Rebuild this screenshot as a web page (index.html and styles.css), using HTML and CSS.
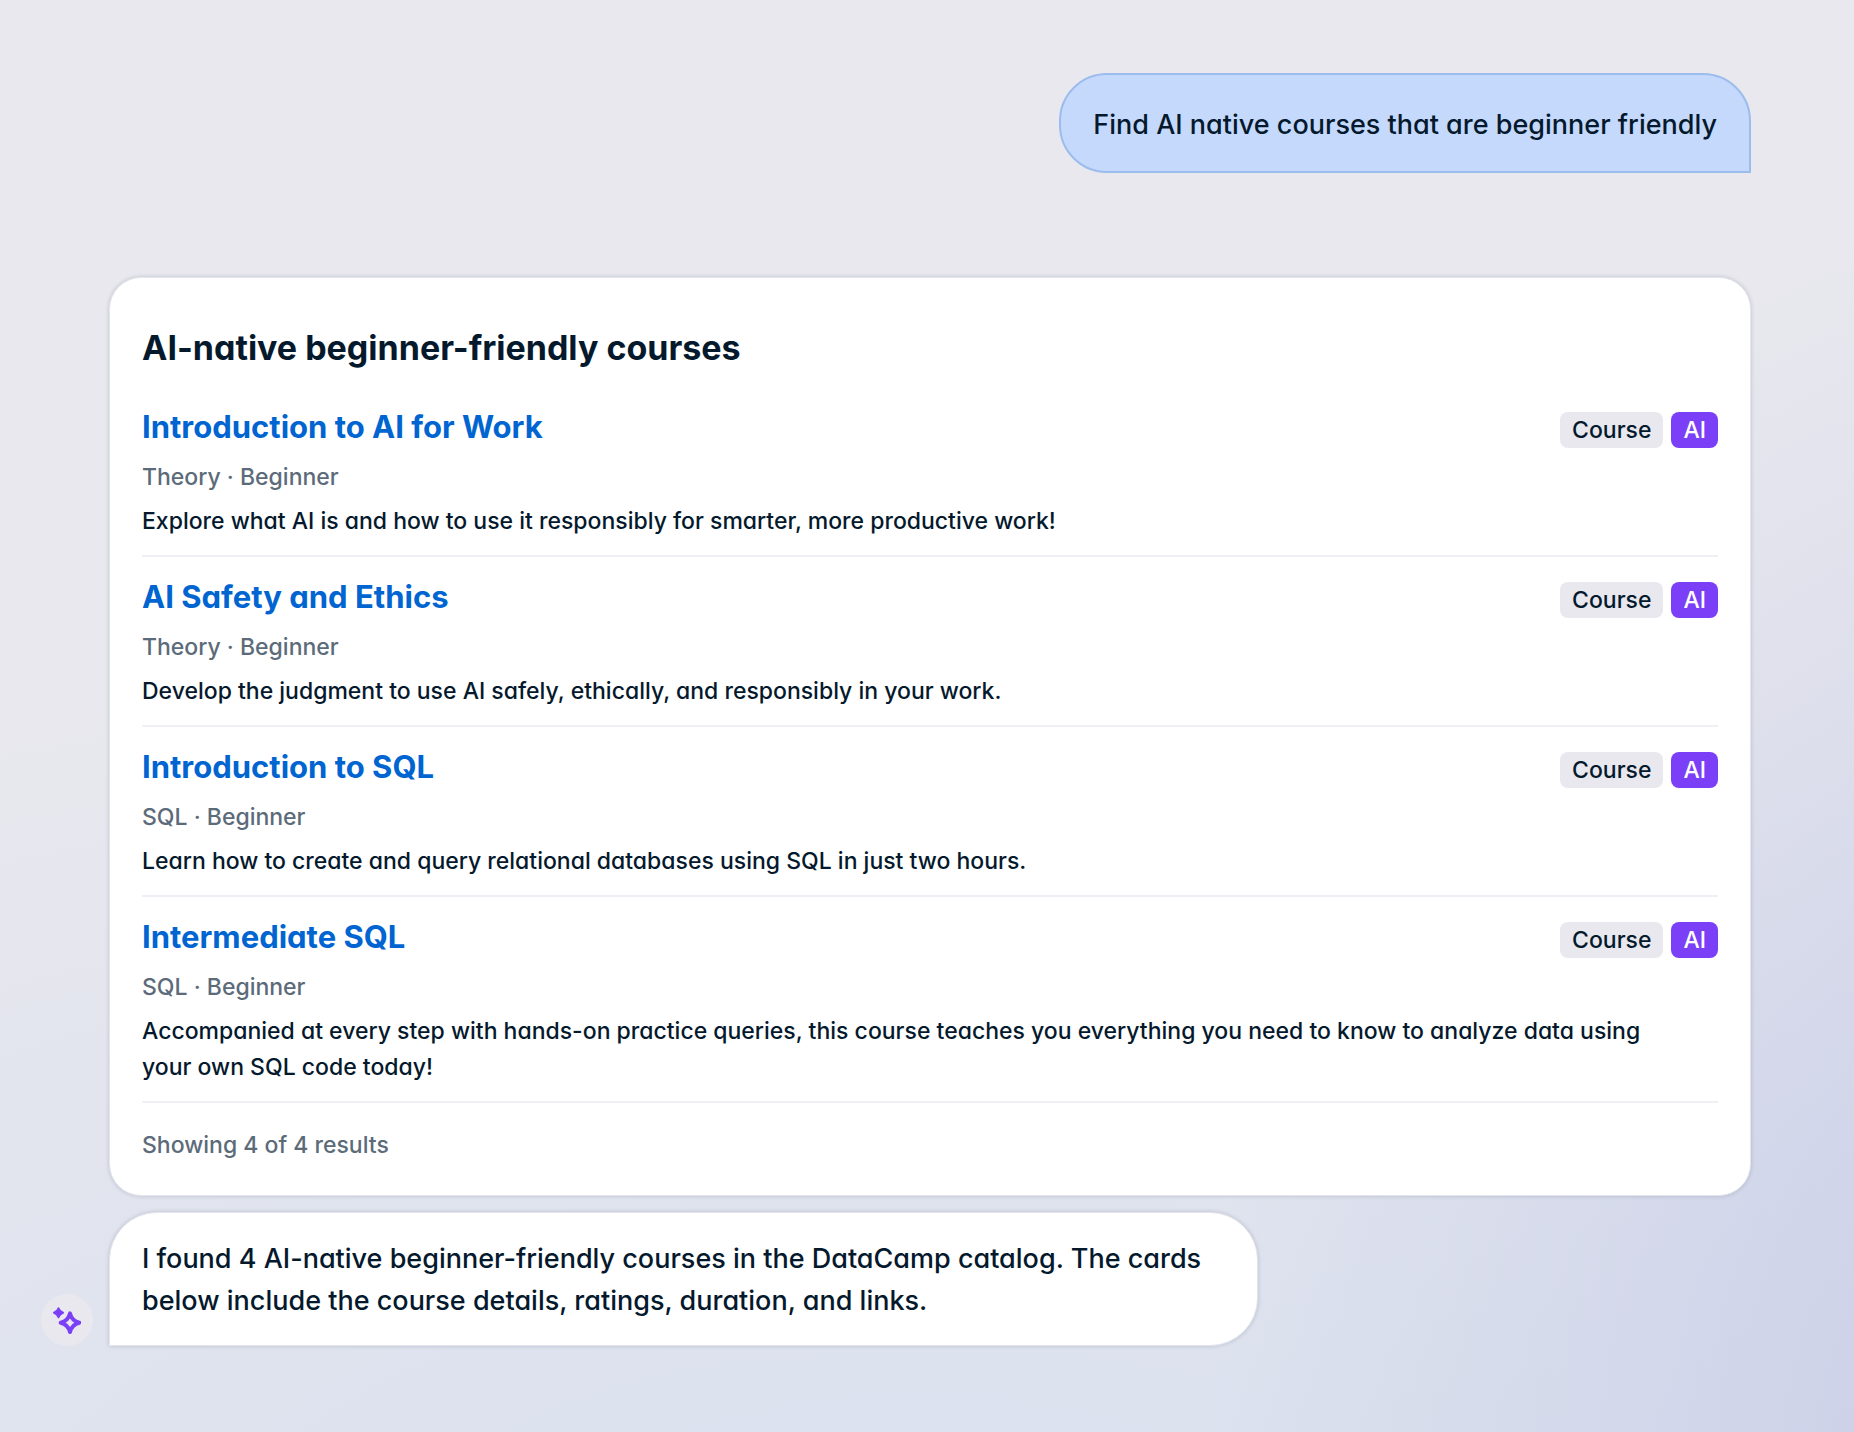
FILE: index.html
```html
<!DOCTYPE html>
<html lang="en">
<head>
    <meta charset="UTF-8">
    <meta name="viewport" content="width=device-width, initial-scale=1.0">
    <title>Course Assistant</title>
    <link rel="stylesheet" href="styles.css">
</head>
<body>
    <main class="chat">
        <p class="bubble bubble-user">Find AI native courses that are beginner friendly</p>

        <section class="card">
            <h1>AI-native beginner-friendly courses</h1>
            <ul class="course-list">
                <li class="course">
                    <div class="course-head">
                        <h2><a href="#">Introduction to AI for Work</a></h2>
                        <div class="tags"><span class="tag">Course</span><span class="tag tag-ai">AI</span></div>
                    </div>
                    <p class="meta">Theory · Beginner</p>
                    <p class="description">Explore what AI is and how to use it responsibly for smarter, more productive work!</p>
                </li>
                <li class="course">
                    <div class="course-head">
                        <h2><a href="#">AI Safety and Ethics</a></h2>
                        <div class="tags"><span class="tag">Course</span><span class="tag tag-ai">AI</span></div>
                    </div>
                    <p class="meta">Theory · Beginner</p>
                    <p class="description">Develop the judgment to use AI safely, ethically, and responsibly in your work.</p>
                </li>
                <li class="course">
                    <div class="course-head">
                        <h2><a href="#">Introduction to SQL</a></h2>
                        <div class="tags"><span class="tag">Course</span><span class="tag tag-ai">AI</span></div>
                    </div>
                    <p class="meta">SQL · Beginner</p>
                    <p class="description">Learn how to create and query relational databases using SQL in just two hours.</p>
                </li>
                <li class="course">
                    <div class="course-head">
                        <h2><a href="#">Intermediate SQL</a></h2>
                        <div class="tags"><span class="tag">Course</span><span class="tag tag-ai">AI</span></div>
                    </div>
                    <p class="meta">SQL · Beginner</p>
                    <p class="description">Accompanied at every step with hands-on practice queries, this course teaches you everything you need to know to analyze data using your own SQL code today!</p>
                </li>
            </ul>
            <p class="results">Showing 4 of 4 results</p>
        </section>

        <div class="avatar">
            <svg width="28" height="28" viewBox="0 0 28 28" aria-hidden="true">
                <path class="spark-small" d="M5.5 2.2 Q6.6 5.6 10 6.7 Q6.6 7.8 5.5 11.2 Q4.4 7.8 1 6.7 Q4.4 5.6 5.5 2.2Z"/>
                <path class="spark-large" d="M17 7.4 Q18.8 14.9 26.3 16.7 Q18.8 18.5 17 26 Q15.2 18.5 7.7 16.7 Q15.2 14.9 17 7.4Z"/>
            </svg>
        </div>
        <p class="bubble bubble-bot">I found 4 AI-native beginner-friendly courses in the DataCamp catalog. The cards below include the course details, ratings, duration, and links.</p>
    </main>
</body>
</html>
```
FILE: styles.css
```css
* {
    box-sizing: border-box;
}
body {
    margin: 0;
    min-height: 100vh;
    font-family: Inter, "Liberation Sans", sans-serif;
    font-feature-settings: "cv11" 1;
    font-weight: 500;
    color: #05192d;
    background:
        radial-gradient(ellipse 45% 90% at 110% 105%, #c8cde7 0%, rgba(200, 205, 231, 0) 100%),
        radial-gradient(ellipse 120% 65% at 50% 110%, #d9e0ee 0%, rgba(217, 224, 238, 0) 100%),
        #e8e8ee;
}
h1, h2, p, ul {
    margin: 0;
    padding: 0;
}
.chat {
    display: grid;
    grid-template-columns: 52px 1fr;
    column-gap: 16px;
    padding: 73px 103px 86px 41px;
}
.bubble {
    grid-column: 2;
    font-size: 27px;
    line-height: 42px;
}
.bubble-user {
    justify-self: end;
    padding: 29px 32px 25px;
    margin-bottom: 104px;
    background: #c5d9fd;
    border: 2px solid #9bbcec;
    border-radius: 48px 48px 0 48px;
}
.bubble-bot {
    justify-self: start;
    max-width: 70%;
    padding: 25px 32px 23px;
    background: #fff;
    border: 1px solid #e4e5ee;
    border-radius: 48px 48px 48px 0;
    box-shadow: 0 0 4px rgba(5, 25, 45, 0.18);
}
.card {
    grid-column: 2;
    padding: 46px 32px 32px;
    margin-bottom: 16px;
    background: #fff;
    border: 1px solid #e4e5ee;
    border-radius: 32px;
    box-shadow: 0 0 4px rgba(5, 25, 45, 0.18);
}
h1 {
    margin-bottom: 15px;
    font-size: 34px;
    line-height: 48px;
    font-weight: 700;
}
.course-list {
    list-style: none;
}
.course {
    padding: 20px 0 16px;
    border-bottom: 2px solid #efeff5;
}
.course-head {
    display: flex;
    justify-content: space-between;
    min-height: 41px;
    margin-bottom: 11px;
}
h2 {
    font-size: 31px;
    line-height: 40px;
    font-weight: 700;
}
h2 a {
    color: #0065d1;
    text-decoration: none;
}
.tags {
    display: flex;
    gap: 8px;
    align-self: flex-end;
}
.tag {
    padding: 0 12px;
    font-size: 23px;
    line-height: 36px;
    background: #e8e8ee;
    border-radius: 8px;
}
.tag-ai {
    color: #fff;
    background: #7b3ff8;
}
.meta, .description, .results {
    font-size: 23px;
    line-height: 36px;
}
.meta {
    margin-bottom: 8px;
    color: #5c6b7a;
}
.description {
    padding-right: 24px;
}
.results {
    padding-top: 24px;
    color: #5c6b7a;
}
.avatar {
    display: flex;
    align-items: center;
    justify-content: center;
    align-self: end;
    width: 52px;
    height: 52px;
    background: #e8e8ee;
    border-radius: 50%;
}
.spark-small {
    fill: #7b3ff8;
    stroke: #7b3ff8;
    stroke-width: 2;
    stroke-linejoin: round;
}
.spark-large {
    fill: none;
    stroke: #7b3ff8;
    stroke-width: 4;
    stroke-linejoin: round;
}
```
